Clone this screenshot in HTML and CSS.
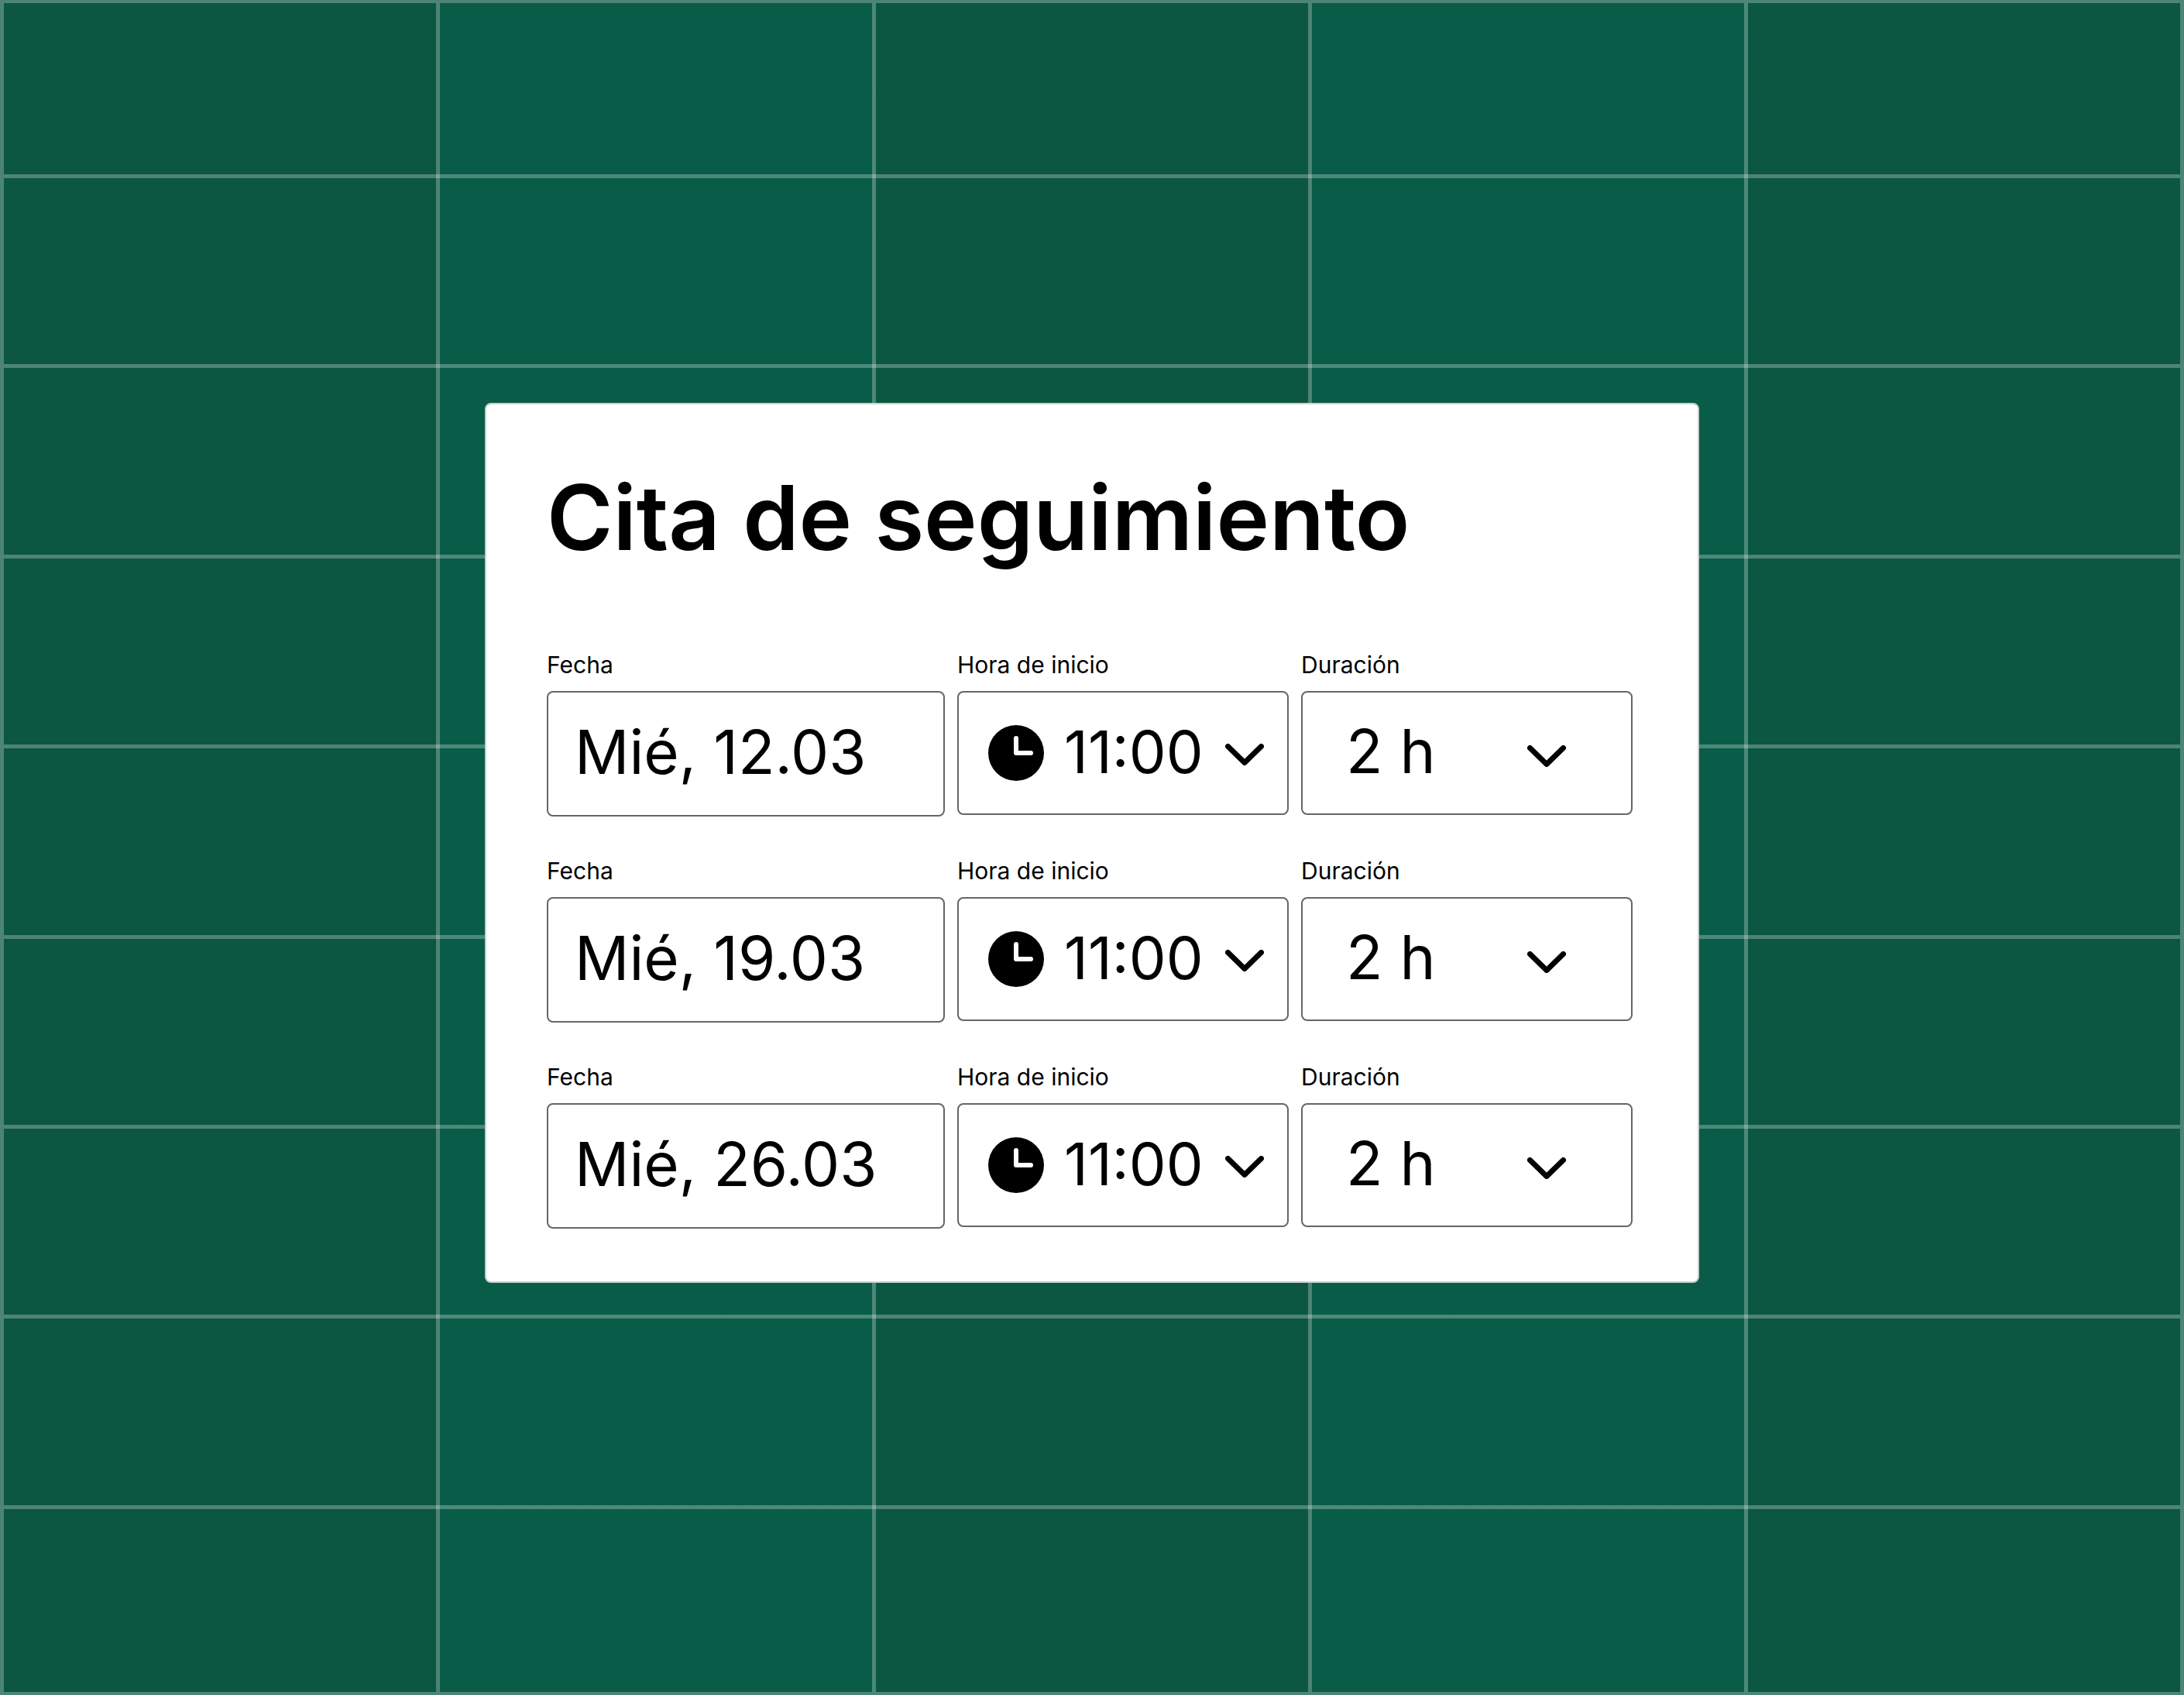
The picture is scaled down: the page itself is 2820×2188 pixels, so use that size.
FILE: index.html
```
<!DOCTYPE html>
<html lang="es">
<head>
<meta charset="utf-8">
<meta name="viewport" content="width=device-width, initial-scale=1">
<title>Cita de seguimiento</title>
<link rel="stylesheet" href="styles.css">
</head>
<body>
<svg class="sprite" aria-hidden="true">
  <symbol id="clock" viewBox="0 0 72 72">
    <circle cx="36" cy="36" r="36" fill="currentColor"/>
    <path d="M36 17v19h19" fill="none" stroke="#fff" stroke-width="6" stroke-linecap="round" stroke-linejoin="round"/>
  </symbol>
  <symbol id="chevron" viewBox="0 0 50 28">
    <path d="M3.5 3.5L25 24.500L46.500 3.500" fill="none" stroke="currentColor" stroke-width="7" stroke-linecap="round" stroke-linejoin="round"/>
  </symbol>
</svg>
<main class="stage">
  <form class="card">
    <h1 class="title">Cita de seguimiento</h1>
    <div class="rows">
      <div class="row">
        <div class="field">
          <label class="label" for="date-1">Fecha</label>
          <input class="control date" id="date-1" type="text" value="Mié, 12.03">
        </div>
        <div class="field">
          <label class="label" for="time-1">Hora de inicio</label>
          <div class="picker">
            <select class="control time" id="time-1"><option>11:00</option><option>12:00</option></select>
            <svg class="clock" aria-hidden="true"><use href="#clock"/></svg>
            <svg class="chevron" aria-hidden="true"><use href="#chevron"/></svg>
          </div>
        </div>
        <div class="field">
          <label class="label" for="length-1">Duración</label>
          <div class="picker picker-length">
            <select class="control length" id="length-1"><option>2 h</option><option>3 h</option></select>
            <svg class="chevron" aria-hidden="true"><use href="#chevron"/></svg>
          </div>
        </div>
      </div>
      <div class="row">
        <div class="field">
          <label class="label" for="date-2">Fecha</label>
          <input class="control date" id="date-2" type="text" value="Mié, 19.03">
        </div>
        <div class="field">
          <label class="label" for="time-2">Hora de inicio</label>
          <div class="picker">
            <select class="control time" id="time-2"><option>11:00</option><option>12:00</option></select>
            <svg class="clock" aria-hidden="true"><use href="#clock"/></svg>
            <svg class="chevron" aria-hidden="true"><use href="#chevron"/></svg>
          </div>
        </div>
        <div class="field">
          <label class="label" for="length-2">Duración</label>
          <div class="picker picker-length">
            <select class="control length" id="length-2"><option>2 h</option><option>3 h</option></select>
            <svg class="chevron" aria-hidden="true"><use href="#chevron"/></svg>
          </div>
        </div>
      </div>
      <div class="row">
        <div class="field">
          <label class="label" for="date-3">Fecha</label>
          <input class="control date" id="date-3" type="text" value="Mié, 26.03">
        </div>
        <div class="field">
          <label class="label" for="time-3">Hora de inicio</label>
          <div class="picker">
            <select class="control time" id="time-3"><option>11:00</option><option>12:00</option></select>
            <svg class="clock" aria-hidden="true"><use href="#clock"/></svg>
            <svg class="chevron" aria-hidden="true"><use href="#chevron"/></svg>
          </div>
        </div>
        <div class="field">
          <label class="label" for="length-3">Duración</label>
          <div class="picker picker-length">
            <select class="control length" id="length-3"><option>2 h</option><option>3 h</option></select>
            <svg class="chevron" aria-hidden="true"><use href="#chevron"/></svg>
          </div>
        </div>
      </div>
    </div>
  </form>
</main>
</body>
</html>
```
FILE: styles.css
```
:root {
  --green-dark: #0b5741;
  --green-light: #095d48;
  --line: rgba(255, 255, 255, 0.27);
  --line-solid: #4c8475;
  --column: calc((100% + 5px) / 5);
  --row: calc((100% - 217px) / 8);
}

* {
  box-sizing: border-box;
}

body {
  margin: 0;
  background: var(--green-dark);
  color: #000;
  font-family: Inter, "Liberation Sans", sans-serif;
}

.sprite {
  position: absolute;
  width: 0;
  height: 0;
}

/* Calendar sheet: five columns, alternating greens, ruled lines */
.stage {
  display: grid;
  place-items: center;
  min-height: 100vh;
  padding-bottom: 12px;
  border: solid var(--line-solid);
  border-width: 4px 5px;
  background:
    repeating-linear-gradient(to bottom,
      var(--line) 221px 226px,
      transparent 226px calc(221px + var(--row))),
    repeating-linear-gradient(to right,
      transparent 0 calc(var(--column) - 5px),
      var(--line) calc(var(--column) - 5px) var(--column)),
    repeating-linear-gradient(to right,
      var(--green-dark) 0 var(--column),
      var(--green-light) var(--column) calc(var(--column) * 2));
  background-clip: padding-box;
}

.card {
  width: 100%;
  max-width: 1568px;
  padding: 74px 84px 68px 78px;
  border: 2px solid #c9d2ce;
  border-radius: 8px;
  background: #fff;
}

.title {
  margin: 0 0 100px;
  font-size: 116px;
  font-weight: 600;
  line-height: 144px;
}

.rows {
  display: grid;
  gap: 52px;
}

.row {
  display: grid;
  grid-template-columns: 514fr 428fr 428fr;
  gap: 16px;
}

.field {
  display: flex;
  flex-direction: column;
  gap: 16px;
  min-width: 0;
}

.label {
  font-size: 30px;
  line-height: 36px;
}

.control {
  width: 100%;
  height: 160px;
  margin: 0;
  border: 2px solid #666;
  border-radius: 8px;
  background: transparent;
  color: inherit;
  font-family: inherit;
  font-size: 78px;
  appearance: none;
}

.date {
  height: 162px;
  padding: 0 16px 6px 34px;
}

.time {
  padding: 0 90px 4px 136px;
  font-size: 76px;
}

.length {
  padding: 0 140px 6px 56px;
}

.picker {
  position: relative;
}

.clock,
.chevron {
  position: absolute;
  top: 0;
  bottom: 0;
  margin: auto 0;
  pointer-events: none;
}

.clock {
  left: 40px;
  width: 72px;
  height: 72px;
}

.chevron {
  right: 32px;
  width: 50px;
  height: 28px;
  margin-top: 68px;
}

.picker-length .chevron {
  right: 86px;
  margin-top: 70px;
}
```
